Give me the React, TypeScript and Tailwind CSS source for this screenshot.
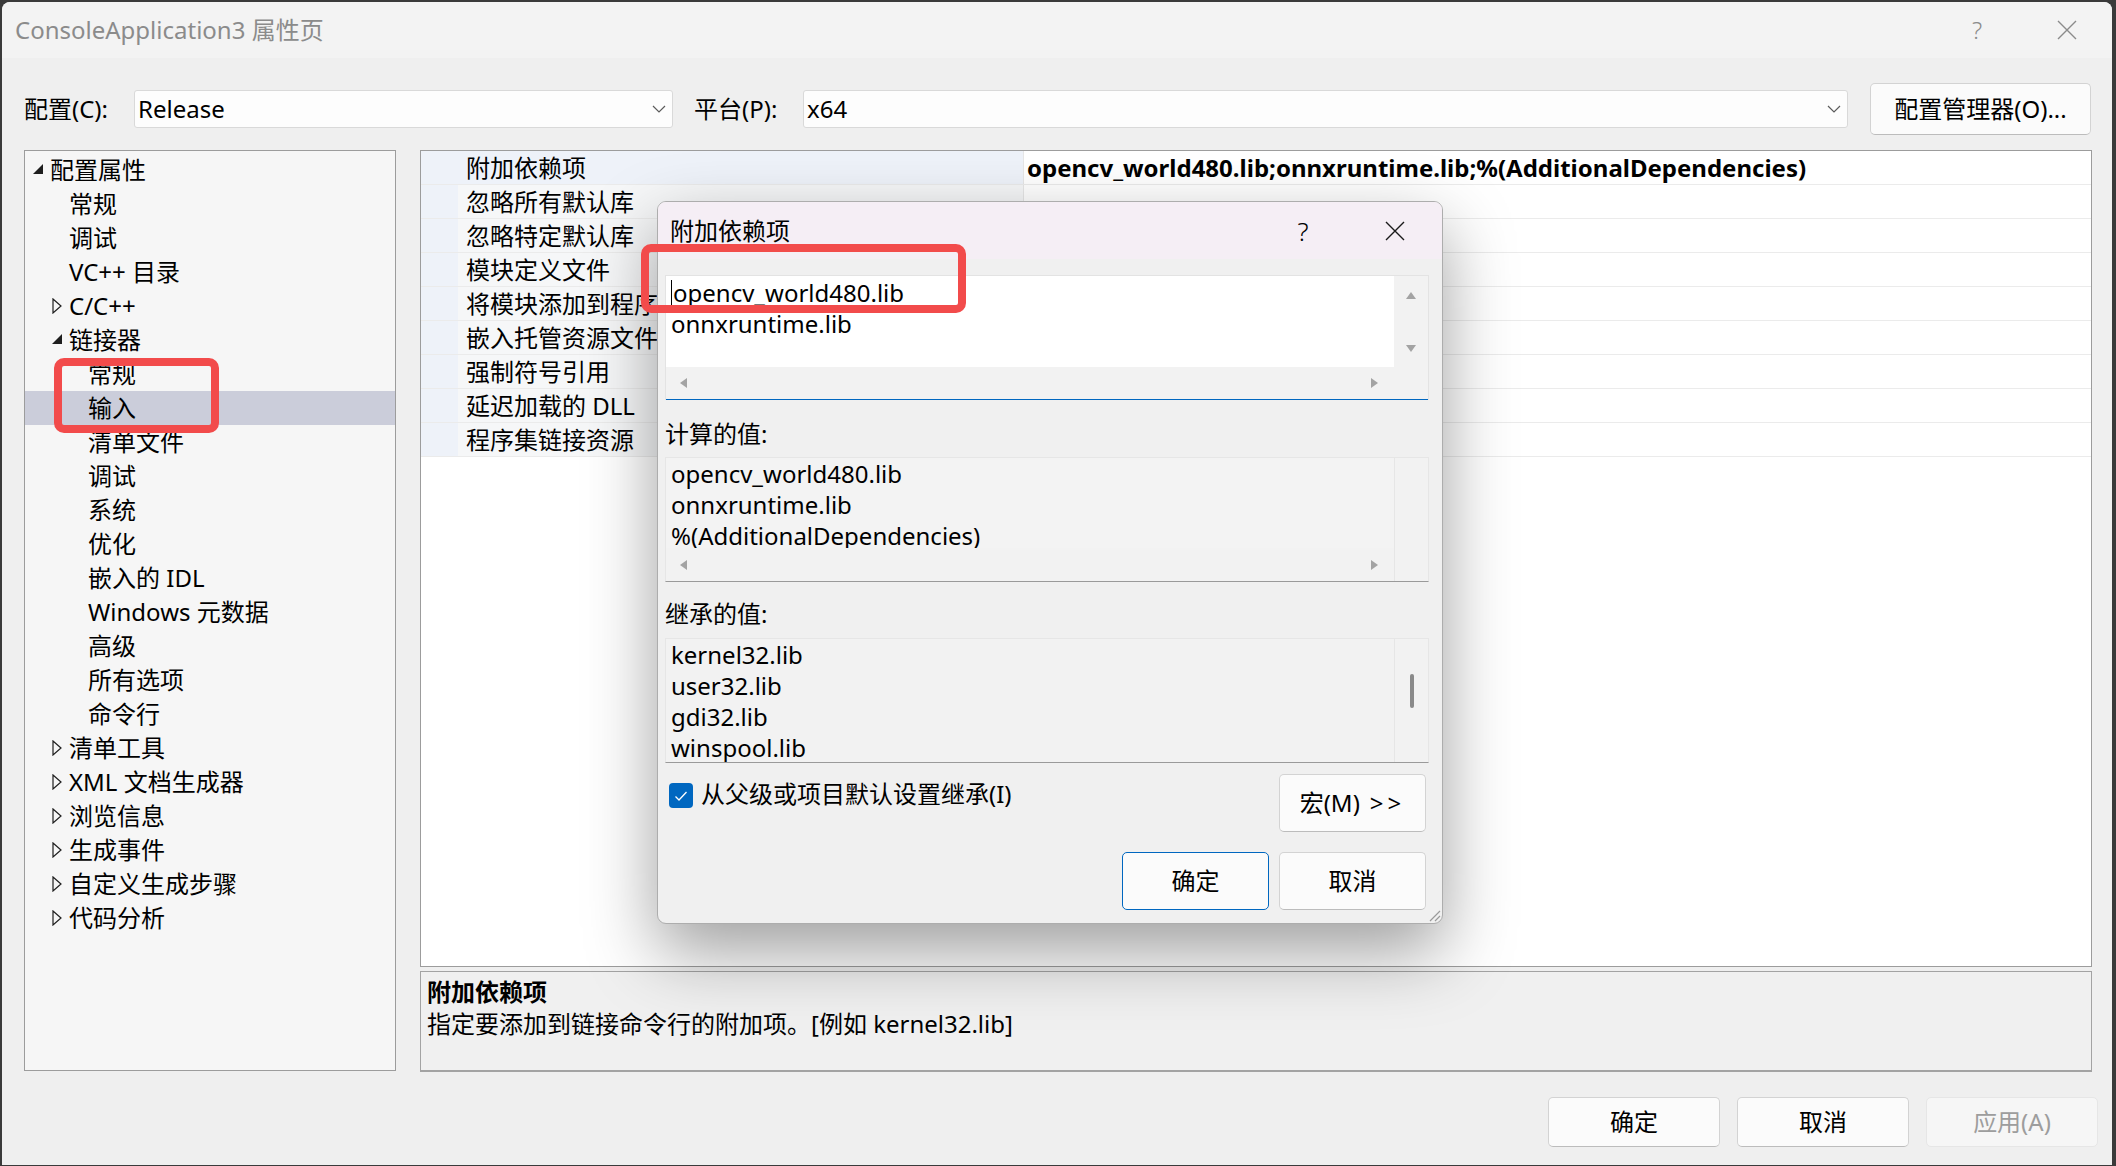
import React from "react";

type TreeItem = { label: string; level: number; arrow?: "open" | "closed"; selected?: boolean };

const treeItems: TreeItem[] = [
  { label: "配置属性", level: 0, arrow: "open" },
  { label: "常规", level: 1 },
  { label: "调试", level: 1 },
  { label: "VC++ 目录", level: 1 },
  { label: "C/C++", level: 1, arrow: "closed" },
  { label: "链接器", level: 1, arrow: "open" },
  { label: "常规", level: 2 },
  { label: "输入", level: 2, selected: true },
  { label: "清单文件", level: 2 },
  { label: "调试", level: 2 },
  { label: "系统", level: 2 },
  { label: "优化", level: 2 },
  { label: "嵌入的 IDL", level: 2 },
  { label: "Windows 元数据", level: 2 },
  { label: "高级", level: 2 },
  { label: "所有选项", level: 2 },
  { label: "命令行", level: 2 },
  { label: "清单工具", level: 1, arrow: "closed" },
  { label: "XML 文档生成器", level: 1, arrow: "closed" },
  { label: "浏览信息", level: 1, arrow: "closed" },
  { label: "生成事件", level: 1, arrow: "closed" },
  { label: "自定义生成步骤", level: 1, arrow: "closed" },
  { label: "代码分析", level: 1, arrow: "closed" },
];

const indent = ["pl-[8px]", "pl-[27px]", "pl-[46px]"];

const properties = [
  "附加依赖项",
  "忽略所有默认库",
  "忽略特定默认库",
  "模块定义文件",
  "将模块添加到程序集",
  "嵌入托管资源文件",
  "强制符号引用",
  "延迟加载的 DLL",
  "程序集链接资源",
];

// shared button look; border colour and text colour are set per button
const btnBase = "flex items-center justify-center rounded-[5px] border";
const btn = `${btnBase} border-[#d3d3d3] border-b-[#bcbcbc] bg-[#fbfbfb] text-black`;

function Chevron() {
  return (
    <svg width="14" height="8" viewBox="0 0 14 8">
      <path d="M1 1l6 6 6-6" stroke="#5c5c5c" strokeWidth="1.2" fill="none" />
    </svg>
  );
}

function CloseIcon({ color }: { color: string }) {
  return (
    <svg width="20" height="20" viewBox="0 0 20 20">
      <path d="M1 1L19 19M19 1L1 19" stroke={color} strokeWidth="1.4" />
    </svg>
  );
}

function Arrow({ kind }: { kind?: "open" | "closed" }) {
  if (kind === "open")
    return (
      <svg width="10" height="10" viewBox="0 0 10 10" className="-mt-[3px]">
        <path d="M10 0V10H0Z" fill="#1e1e1e" />
      </svg>
    );
  if (kind === "closed")
    return (
      <svg width="10" height="16" viewBox="0 0 10 16">
        <path d="M1 1L9 8L1 15Z" fill="none" stroke="#1e1e1e" strokeWidth="1.2" />
      </svg>
    );
  return null;
}

function Tri({ dir }: { dir: "up" | "down" | "left" | "right" }) {
  const d = {
    up: "M0 8L5 1L10 8Z",
    down: "M0 1L10 1L5 8Z",
    left: "M8 0V10L1 5Z",
    right: "M1 0V10L8 5Z",
  }[dir];
  return (
    <svg width="10" height="10" viewBox="0 0 10 10">
      <path d={d} fill="#a3a3a3" />
    </svg>
  );
}

function Tree() {
  return (
    <div className="h-[921px] w-[372px] border border-[#9c9c9c] bg-[#f6f6f6] pt-[2px]">
      {treeItems.map((it, i) => (
        <div
          key={i}
          className={`flex h-[34px] items-center ${indent[it.level]} ${it.selected ? "bg-[#cbcdda]" : ""}`}
        >
          <div className="flex w-[17px] items-center">
            <Arrow kind={it.arrow} />
          </div>
          <span className="whitespace-nowrap leading-[34px]">{it.label}</span>
        </div>
      ))}
    </div>
  );
}

function PropertyGrid() {
  return (
    <div className="h-[817px] border border-[#9c9c9c] bg-white">
      {properties.map((p, i) => (
        <div key={i} className="flex h-[34px] border-b border-[#ebebeb]">
          <div className="w-[37px] bg-[#eef2f9]" />
          <div
            className={`w-[565px] overflow-hidden whitespace-nowrap pl-[8px] leading-[34px] ${
              i === 0 ? "bg-[#eef2f9]" : "bg-[#f6f7f8]"
            }`}
          >
            {p}
          </div>
          <div className="flex-1 whitespace-nowrap border-l border-[#e6e6e6] pl-[3px] font-bold leading-[34px]">
            {i === 0 ? "opencv_world480.lib;onnxruntime.lib;%(AdditionalDependencies)" : ""}
          </div>
        </div>
      ))}
    </div>
  );
}

function Dialog() {
  return (
    <div className="absolute left-[657px] top-[201px] flex h-[723px] w-[786px] flex-col overflow-hidden rounded-[9px] border border-[#adadad] bg-[#f0f0f0] shadow-[0_28px_70px_rgba(0,0,0,0.38)]">
      <div className="flex h-[57px] shrink-0 items-center bg-[#f5eef5] pl-[12px]">
        <span className="flex-1 leading-[34px]">附加依赖项</span>
        <span className="w-[90px] text-center text-[26px] font-light leading-[34px]">?</span>
        <div className="flex w-[94px] justify-center">
          <CloseIcon color="#1a1a1a" />
        </div>
      </div>
      <div className="flex flex-1 flex-col pl-[7px] pr-[13px]">
        {/* edit box */}
        <div className="mt-[16px] flex h-[125px] flex-col border border-b-0 border-[#e3e3e3] bg-[#f2f2f2]">
          <div className="flex flex-1">
            <div className="flex flex-1 flex-col">
              <div className="h-[91px] bg-white pl-[5px] pt-[1px] leading-[31px]">
                <div className="flex items-center">
                  <span className="mr-[1px] inline-block h-[26px] w-[1px] bg-black" />
                  opencv_world480.lib
                </div>
                <div>onnxruntime.lib</div>
              </div>
              <div className="flex h-[32px] items-center justify-between pl-[13px] pr-[14px]">
                <Tri dir="left" />
                <Tri dir="right" />
              </div>
            </div>
            <div className="flex w-[34px] flex-col items-center pt-[15px]">
              <Tri dir="up" />
              <div className="h-[43px]" />
              <Tri dir="down" />
            </div>
          </div>
          <div className="h-[2px] bg-[#0067c0]" />
        </div>

        <div className="mt-[17px] h-[34px] leading-[34px]">计算的值:</div>
        <div className="mt-[6px] flex h-[125px] border border-[#e6e6e6] border-b-[#9a9a9a] bg-[#f2f2f2]">
          <div className="flex flex-1 flex-col">
            <div className="h-[90px] overflow-hidden bg-[#f3f3f3] pl-[5px] pt-[0px] leading-[31px]">
              <div>opencv_world480.lib</div>
              <div>onnxruntime.lib</div>
              <div>%(AdditionalDependencies)</div>
            </div>
            <div className="flex flex-1 items-center justify-between pl-[13px] pr-[14px]">
              <Tri dir="left" />
              <Tri dir="right" />
            </div>
          </div>
          <div className="w-[34px] border-l border-[#e6e6e6]" />
        </div>

        <div className="mt-[15px] h-[34px] leading-[34px]">继承的值:</div>
        <div className="mt-[7px] flex h-[125px] border border-[#e6e6e6] border-b-[#9a9a9a] bg-[#f2f2f2]">
          <div className="flex-1 overflow-hidden pl-[5px] pt-[0px] leading-[31px]">
            <div>kernel32.lib</div>
            <div>user32.lib</div>
            <div>gdi32.lib</div>
            <div>winspool.lib</div>
          </div>
          <div className="flex w-[34px] justify-center border-l border-[#e6e6e6] pt-[35px]">
            <div className="h-[34px] w-[4px] rounded-full bg-[#8a8a8a]" />
          </div>
        </div>

        <div className="mr-[3px] mt-[11px] flex items-start justify-between">
          <div className="ml-[4px] mt-[6px] flex items-center gap-[8px]">
            <div className="flex h-[25px] w-[24px] items-center justify-center rounded-[4px] bg-[#0067c0]">
              <svg width="14" height="12" viewBox="0 0 14 12">
                <path d="M1.5 6.5L5 10L12.5 2" stroke="white" strokeWidth="1.3" fill="none" />
              </svg>
            </div>
            <span className="-mt-[3px] leading-[34px]">从父级或项目默认设置继承(I)</span>
          </div>
          <div className={`${btn} h-[58px] w-[147px]`}>
            宏(M) <span className="ml-[10px] tracking-[4px]">&gt;&gt;</span>
          </div>
        </div>

        <div className="mr-[3px] mt-[20px] flex justify-end gap-[10px]">
          <div className={`${btnBase} h-[58px] w-[147px] border-[#0067c0] bg-[#fbfbfb] text-black`}>确定</div>
          <div className={`${btn} h-[58px] w-[147px]`}>取消</div>
        </div>
      </div>
      <svg width="14" height="14" viewBox="0 0 14 14" className="absolute bottom-[1px] right-[1px]">
        <path d="M13 3L3 13M13 8L8 13" stroke="#9a9a9a" strokeWidth="1.2" />
      </svg>
    </div>
  );
}

export default function App() {
  return (
    <div className="relative h-[1166px] w-[2116px] overflow-hidden bg-[#3a3a3a] pl-[2px] pt-[2px] font-['Noto_Sans','Noto_Sans_CJK_SC',sans-serif] text-[24px] text-black">
      <div className="flex h-[1163px] w-[2110px] flex-col overflow-hidden rounded-t-[8px] bg-[#efefef]">
        {/* title bar */}
        <div className="flex h-[56px] shrink-0 items-center bg-[#f3f3f3] pl-[13px]">
          <span className="flex-1 leading-[34px] text-[#8b8b8b]">ConsoleApplication3 属性页</span>
          <span className="w-[90px] text-center font-light leading-[34px] text-[#8b8b8b]">?</span>
          <div className="flex w-[90px] justify-center">
            <CloseIcon color="#8b8b8b" />
          </div>
        </div>

        <div className="flex flex-1 flex-col pl-[22px]">
          {/* config row */}
          <div className="mt-[25px] flex h-[52px] items-center">
            <span className="w-[110px] whitespace-nowrap leading-[34px]">配置(C):</span>
            <div className="flex h-[38px] w-[539px] items-center justify-between rounded-[3px] border border-[#d9d9d9] bg-[#fdfdfd] pl-[3px] pr-[6px]">
              <span className="leading-[34px]">Release</span>
              <Chevron />
            </div>
            <span className="ml-[21px] w-[109px] whitespace-nowrap leading-[34px]">平台(P):</span>
            <div className="flex h-[38px] w-[1045px] items-center justify-between rounded-[3px] border border-[#d9d9d9] bg-[#fdfdfd] pl-[3px] pr-[6px]">
              <span className="leading-[34px]">x64</span>
              <Chevron />
            </div>
            <div className={`${btn} ml-[22px] h-[52px] w-[221px]`}>配置管理器(O)...</div>
          </div>

          {/* main area */}
          <div className="mt-[15px] flex">
            <Tree />
            <div className="ml-[24px] flex w-[1672px] flex-col">
              <PropertyGrid />
              <div className="mt-[4px] h-[101px] border border-b-2 border-[#a3a3a3] bg-[#f0f0f0] pl-[6px] pt-[4px]">
                <div className="font-bold leading-[32px]">附加依赖项</div>
                <div className="leading-[32px]">指定要添加到链接命令行的附加项。[例如 kernel32.lib]</div>
              </div>
            </div>
          </div>

          {/* bottom buttons */}
          <div className="mt-[25px] flex justify-end gap-[17px] pr-[14px]">
            <div className={`${btn} h-[50px] w-[172px]`}>确定</div>
            <div className={`${btn} h-[50px] w-[172px]`}>取消</div>
            <div className={`${btnBase} h-[50px] w-[172px] border-[#e6e6e6] bg-[#f6f6f6] text-[#9d9d9d]`}>
              应用(A)
            </div>
          </div>
        </div>
      </div>

      <Dialog />

      {/* annotation boxes */}
      <div className="absolute left-[54px] top-[358px] h-[75px] w-[165px] rounded-[10px] border-[8px] border-[#f24b4b]" />
      <div className="absolute left-[641px] top-[244px] h-[69px] w-[325px] rounded-[10px] border-[8px] border-[#f24b4b]" />
    </div>
  );
}
